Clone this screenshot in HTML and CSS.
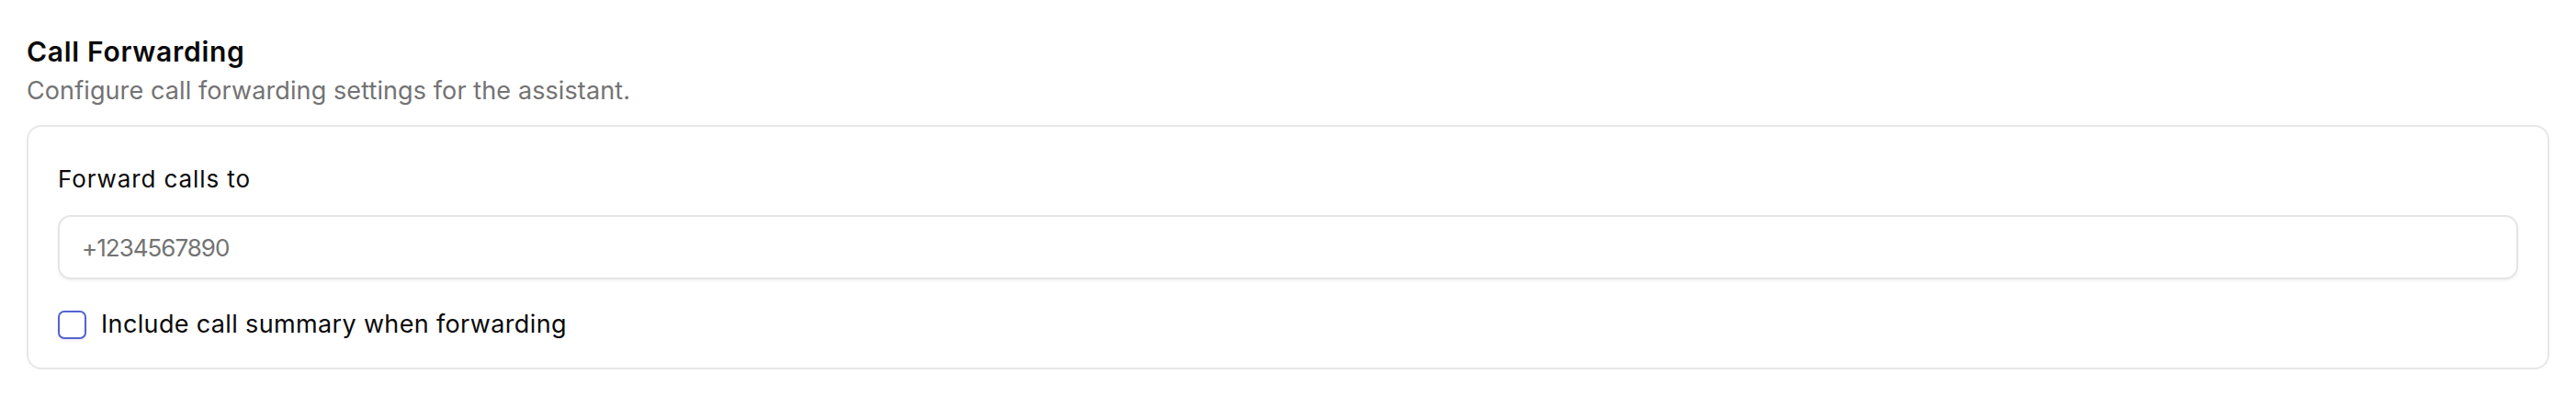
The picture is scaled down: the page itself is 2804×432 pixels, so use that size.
FILE: index.html
```html
<!DOCTYPE html>
<html lang="en">

<head>
    <meta charset="UTF-8">
    <meta name="viewport" content="width=device-width, initial-scale=1.0">
    <title>Call Forwarding</title>
    <link rel="stylesheet" href="styles.css">
</head>

<body>
    <div class="section">
        <h2 class="section-title">Call Forwarding</h2>
        <p class="section-desc">Configure call forwarding settings for the assistant.</p>

        <div class="card">
            <label class="field-label" for="forwardTo">Forward calls to</label>
            <input id="forwardTo" class="field-input" type="tel" placeholder="+1234567890">

            <label class="check-row">
                <input type="checkbox" class="check-box">
                <span>Include call summary when forwarding</span>
            </label>
        </div>
    </div>
</body>
</html>
```

FILE: styles.css
```css
body {
    margin: 0;
    padding: 0;
    background: #fff;
    font-family: Inter, 'Noto Sans', sans-serif;
    color: #0a0a0a;
}

.section {
    padding: 36px 29px 0;
}

.section-title {
    margin: 0;
    font-size: 30px;
    line-height: 40px;
    font-weight: 600;
    letter-spacing: 0.7px;
}

.section-desc {
    margin: 4px 0 0;
    font-size: 27px;
    line-height: 38px;
    letter-spacing: 0.1px;
    color: #737373;
}

.card {
    margin-top: 18px;
    border: 2px solid #e7e7e7;
    border-radius: 16px;
    padding: 39px 32px 28px;
    display: flex;
    flex-direction: column;
}

.field-label {
    font-size: 26px;
    line-height: 36px;
    font-weight: 400;
    letter-spacing: 0.9px;
}

.field-input {
    margin-top: 21px;
    height: 70px;
    box-sizing: border-box;
    border: 2px solid #e5e5e5;
    border-radius: 14px;
    padding: 0 24px;
    font-family: inherit;
    font-size: 26px;
    letter-spacing: -1px;
    color: #0a0a0a;
    outline: none;
    box-shadow: 0 2px 3px rgba(0, 0, 0, 0.05);
}

.field-input::placeholder {
    color: #737373;
}

.check-row {
    margin-top: 30px;
    display: flex;
    align-items: center;
    gap: 16px;
    font-size: 27px;
    line-height: 38px;
    font-weight: 400;
    letter-spacing: 0.35px;
}

.check-box {
    appearance: none;
    -webkit-appearance: none;
    margin: 0;
    width: 31px;
    height: 31px;
    box-sizing: border-box;
    border: 2px solid #5361d3;
    border-radius: 7px;
    background: #fff;
    box-shadow: 0 2px 3px rgba(0, 0, 0, 0.06);
}
```
